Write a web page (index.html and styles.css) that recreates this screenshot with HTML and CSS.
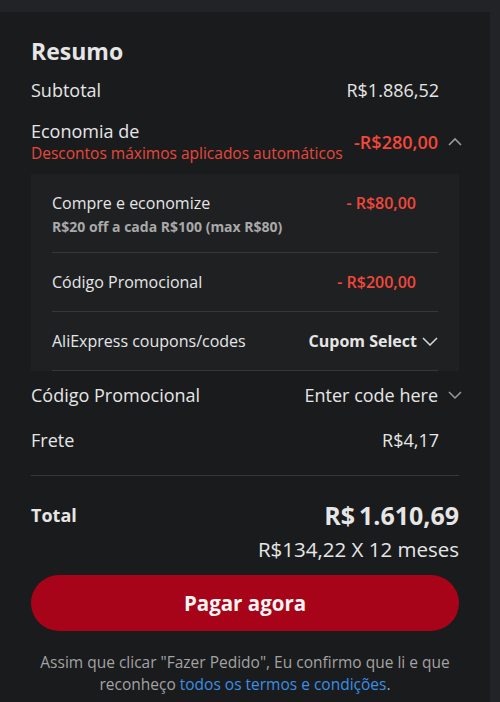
FILE: index.html
```html
<!DOCTYPE html>
<html>
<head>
  <link rel="stylesheet" href="styles.css">
</head>
<body>
  <div class="summary">
    <h2 class="title">Resumo</h2>

    <div class="row inset">
      <span>Subtotal</span>
      <span>R$1.886,52</span>
    </div>

    <div class="row savings">
      <div>
        <div>Economia de</div>
        <div class="savings-note">Descontos máximos aplicados automáticos</div>
      </div>
      <div class="savings-value">
        <span class="red strong">-R$280,00</span>
        <svg class="chev" width="14" height="10" viewBox="0 0 14 10"><polyline points="1,8 7,2 13,8" fill="none" stroke="#9a9a9a" stroke-width="1.6"/></svg>
      </div>
    </div>

    <div class="discounts">
      <div class="discount">
        <div>
          <div>Compre e economize</div>
          <div class="discount-sub">R$20 off a cada R$100 (max R$80)</div>
        </div>
        <span class="red strong">- R$80,00</span>
      </div>
      <div class="discount">
        <span>Código Promocional</span>
        <span class="red strong">- R$200,00</span>
      </div>
      <div class="discount">
        <span>AliExpress coupons/codes</span>
        <span class="select">
          <strong>Cupom Select</strong>
          <svg width="16" height="10" viewBox="0 0 16 10"><polyline points="1,2 8,9 15,2" fill="none" stroke="#d8d8d8" stroke-width="1.5"/></svg>
        </span>
      </div>
    </div>

    <div class="row promo">
      <span>Código Promocional</span>
      <span class="select">
        Enter code here
        <svg class="chev" width="14" height="10" viewBox="0 0 14 10"><polyline points="1,2 7,8 13,2" fill="none" stroke="#9a9a9a" stroke-width="1.5"/></svg>
      </span>
    </div>

    <div class="row inset shipping">
      <span>Frete</span>
      <span>R$4,17</span>
    </div>

    <div class="total">
      <span class="total-label">Total</span>
      <div class="total-values">
        <div class="total-price">R$<span class="amount">1.610,69</span></div>
        <div class="installments">R$134,22 X 12 meses</div>
      </div>
    </div>

    <button class="pay">Pagar agora</button>

    <p class="terms">Assim que clicar "Fazer Pedido", Eu confirmo que li e que reconheço <a href="#">todos os termos e condições</a>.</p>
  </div>
</body>
</html>
```

FILE: styles.css
```css
body {
  margin: 0;
  background-color: #222326;
  font-family: "Open Sans", "Noto Sans", sans-serif;
  color: #e6e6e6;
}

.summary {
  width: 490px;
  box-sizing: border-box;
  margin-top: 12px;
  padding: 24px 31px 20px;
  background-color: #1a1b1d;
}

.title {
  margin: 0;
  font-size: 23px;
  line-height: 30px;
  font-weight: 700;
}

.row {
  display: flex;
  justify-content: space-between;
  align-items: center;
  font-size: 18px;
  line-height: 24px;
  margin-top: 12px;
  white-space: nowrap;
}

.inset {
  padding-right: 20px;
}

.red {
  color: #f2473a;
}

.strong {
  font-weight: 600;
}

.savings {
  margin-top: 18px;
  line-height: 22px;
}

.savings-note {
  font-size: 15.5px;
  color: #e8483a;
}

.savings-value {
  display: flex;
  align-items: center;
  flex-shrink: 0;
  margin-right: -3px;
}

.chev {
  margin-left: 10px;
}

.discounts {
  margin-top: 10px;
  padding: 0 21px;
  background-color: #1e2022;
}

.discount {
  display: flex;
  justify-content: space-between;
  align-items: flex-start;
  padding: 19px 22px 19px 0;
  font-size: 16px;
  line-height: 20px;
  border-bottom: 1px solid #35373a;
}

.discount:first-child {
  padding-top: 19px;
  padding-bottom: 15px;
}

.discount-sub {
  margin-top: 4px;
  font-size: 14px;
  font-weight: 700;
  color: #a9a9a9;
}

.discount .select {
  margin-right: -22px;
}

.select {
  display: flex;
  align-items: center;
}

.select svg {
  margin-left: 5px;
}

.promo {
  margin-top: 12px;
}

.promo .select {
  margin-right: -3px;
}

.promo .chev {
  margin-left: 10px;
}

.shipping {
  margin-top: 21px;
}

.total {
  display: flex;
  justify-content: space-between;
  align-items: flex-start;
  margin-top: 23px;
  padding-top: 23px;
  border-top: 1px solid #35373a;
}

.total-label {
  font-size: 18px;
  font-weight: 700;
  line-height: 32px;
}

.total-values {
  text-align: right;
}

.total-price {
  font-size: 25px;
  font-weight: 700;
  line-height: 32px;
}

.amount {
  margin-left: 4px;
}

.installments {
  margin-top: 4px;
  font-size: 20.5px;
  line-height: 28px;
}

.pay {
  display: block;
  width: 100%;
  height: 56px;
  margin-top: 12px;
  border: none;
  border-radius: 28px;
  background-color: #a80419;
  color: #f4f4f4;
  font-family: inherit;
  font-size: 20.5px;
  font-weight: 700;
  cursor: pointer;
}

.terms {
  margin: 20px 0 0;
  font-size: 15.5px;
  line-height: 22px;
  text-align: center;
  color: #a3a3a3;
}

.terms a {
  color: #3b8fe4;
  text-decoration: none;
}
```
